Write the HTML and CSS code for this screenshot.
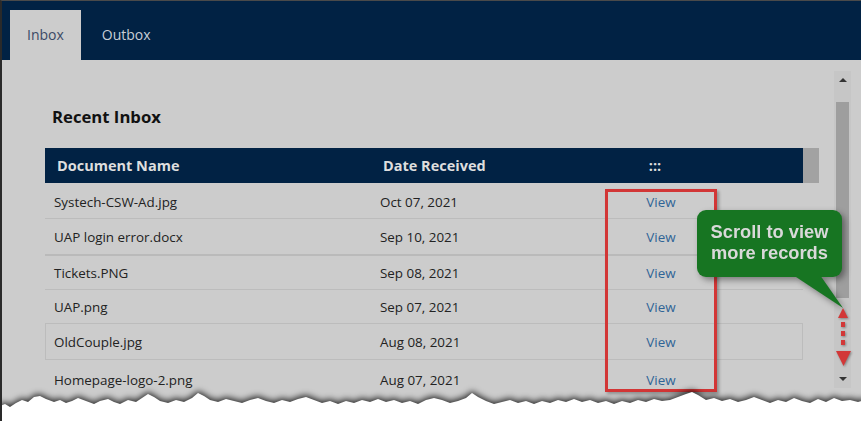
FILE: index.html
```html
<!DOCTYPE html>
<html>
<head>
<meta charset="utf-8">
<link rel="stylesheet" href="styles.css">
</head>
<body>
<div class="window">
  <div class="tabs">
    <div class="tab active">Inbox</div>
    <div class="tab">Outbox</div>
  </div>
  <div class="main">
    <div class="content">
      <h2 class="title">Recent Inbox</h2>
      <div class="table">
        <div class="thead">
          <div class="th c1">Document Name</div>
          <div class="th c2">Date Received</div>
          <div class="th c3">:::</div>
          <div class="th-empty"></div>
          <div class="gutter"></div>
        </div>
        <div class="row r1"><div class="td c1">Systech-CSW-Ad.jpg</div><div class="td c2">Oct 07, 2021</div><div class="td c3"><a class="view">View</a></div></div>
        <div class="row r2"><div class="td c1">UAP login error.docx</div><div class="td c2">Sep 10, 2021</div><div class="td c3"><a class="view">View</a></div></div>
        <div class="row r3"><div class="td c1">Tickets.PNG</div><div class="td c2">Sep 08, 2021</div><div class="td c3"><a class="view">View</a></div></div>
        <div class="row r4"><div class="td c1">UAP.png</div><div class="td c2">Sep 07, 2021</div><div class="td c3"><a class="view">View</a></div></div>
        <div class="row r5"><div class="td c1">OldCouple.jpg</div><div class="td c2">Aug 08, 2021</div><div class="td c3"><a class="view">View</a></div></div>
        <div class="row r6"><div class="td c1">Homepage-logo-2.png</div><div class="td c2">Aug 07, 2021</div><div class="td c3"><a class="view">View</a></div></div>
      </div>
    </div>
    <div class="scrollbar">
      <div class="sb-btn"><span class="tri-up"></span></div>
      <div class="sb-thumb"></div>
      <div class="sb-rest"></div>
      <div class="sb-btn"><span class="tri-down"></span></div>
    </div>
  </div>

  <div class="redbox"></div>

  <div class="callout">Scroll to view<br>more records</div>

  <svg class="arrow" width="20" height="66" viewBox="0 0 20 66">
    <polygon points="9,3 4,13 14,13" fill="#d23838"/>
    <rect x="7" y="17" width="4" height="5" fill="#d23838"/>
    <rect x="7" y="26" width="4" height="5" fill="#d23838"/>
    <rect x="7" y="35" width="4" height="5" fill="#d23838"/>
    <polygon points="2,46 17,46 9.5,61" fill="#d23838"/>
  </svg>

  <svg class="torn" width="865" height="40" viewBox="0 0 865 40" preserveAspectRatio="none">
    <path d="M0,18 L5,16 L10,19 L16,15 L22,12 L28,14 L34,9 L40,8 L46,11 L54,14 L60,12 L66,15 L72,13 L78,10 L86,13 L94,16 L100,13 L108,11 L114,14 L120,16 L128,12 L136,14 L142,10 L148,6 L154,9 L160,13 L168,15 L176,12 L184,14 L192,10 L198,5 L204,8 L210,12 L218,14 L226,11 L234,13 L242,15 L250,12 L258,10 L266,13 L274,15 L282,12 L290,14 L298,11 L306,9 L314,12 L322,15 L330,13 L338,16 L346,13 L354,15 L362,12 L370,14 L378,11 L386,14 L394,12 L402,15 L410,13 L418,16 L426,12 L434,10 L442,12 L450,15 L458,13 L466,10 L472,5 L478,9 L486,13 L494,16 L502,14 L510,12 L518,15 L526,13 L534,16 L542,13 L550,15 L558,12 L566,14 L574,11 L582,14 L590,12 L598,15 L606,13 L614,16 L622,13 L630,15 L638,12 L646,14 L654,11 L662,13 L670,12 L678,9 L686,6 L692,4 L698,7 L706,12 L714,10 L722,13 L730,11 L738,14 L746,12 L754,9 L762,12 L770,15 L778,12 L786,14 L794,10 L802,13 L810,15 L818,11 L826,14 L834,10 L842,13 L850,12 L858,14 L865,12 L865,40 L0,40 Z" fill="#ffffff"/>
  </svg>
</div>
</body>
</html>
```

FILE: styles.css
```css
* { box-sizing: border-box; }
html, body { margin: 0; padding: 0; }
body {
  width: 861px;
  height: 421px;
  overflow: hidden;
  background: #ffffff;
  font-family: "Open Sans", "DejaVu Sans", sans-serif;
}
.window {
  position: relative;
  width: 861px;
  height: 421px;
  overflow: hidden;
  background: #cccccc;
  border-left: 2px solid #2a2a2a;
  border-top: 1px solid #4a4a4a;
}
.tabs {
  height: 59px;
  background: #012244;
  display: flex;
  align-items: flex-end;
  padding-left: 8px;
  gap: 4px;
}
.tab {
  height: 50px;
  line-height: 50px;
  padding: 0 17px;
  font-size: 14px;
  color: #c9ced6;
}
.tab.active {
  background: #cccccc;
  color: #3b4a66;
}
.main {
  display: flex;
  padding-top: 11px;
}
.content {
  width: 832px;
  padding-left: 43px;
}
.title {
  margin: 35px 0 20px 7px;
  font-size: 16.7px;
  line-height: 22px;
  font-weight: 700;
  color: #111111;
}
.table {
  width: 774px;
}
.thead {
  display: grid;
  grid-template-columns: 326px 200px 180px 52px 16px;
  height: 35px;
  background: #012244;
}
.th {
  display: flex;
  align-items: center;
  font-size: 14.5px;
  font-weight: 700;
  color: #dedede;
}
.th.c1, .th.c2 { padding-left: 12px; }
.th.c3 { justify-content: center; padding-right: 12px; }
.gutter { background: #a2a2a2; }
.row {
  display: grid;
  grid-template-columns: 326px 200px 180px 1fr;
  width: 758px;
  font-size: 13.4px;
  color: #222222;
  border-bottom: 1px solid #bcbcbc;
}
.td { display: flex; align-items: center; }
.td.c1, .td.c2 { padding-left: 9px; }
.td.c3 { justify-content: center; }
.view { color: #2f6496; }
.r1 { height: 36px; padding-top: 2px; }
.r2 { height: 37px; border-bottom: 2px solid #bababa; padding-top: 1px; }
.r3 { height: 34px; }
.r4 { height: 33px; border-bottom: none; }
.r5 { height: 37px; border-bottom: none; box-shadow: inset 0 0 0 1px #bcbcbc; }
.r6 { height: 38px; border-bottom: none; padding-top: 1px; }
.scrollbar {
  width: 17px;
  height: 317px;
  background: #c6c6c6;
  display: flex;
  flex-direction: column;
}
.sb-btn {
  height: 18px;
  display: flex;
  align-items: center;
  justify-content: center;
}
.sb-thumb {
  height: 196px;
  margin: 13px 2px 0 2px;
  background: #9e9e9e;
}
.sb-rest { flex: 1; }
.tri-up {
  width: 0; height: 0;
  border-left: 4px solid transparent;
  border-right: 4px solid transparent;
  border-bottom: 4px solid #333333;
}
.tri-down {
  width: 0; height: 0;
  border-left: 4px solid transparent;
  border-right: 4px solid transparent;
  border-top: 4px solid #333333;
}
.redbox {
  position: absolute;
  left: 603px;
  top: 188px;
  width: 112px;
  height: 203px;
  border: 3px solid #d23636;
  box-shadow: 2px 2px 3px rgba(0, 0, 0, 0.3);
}
.callout {
  position: absolute;
  left: 695px;
  top: 209px;
  width: 145px;
  height: 67px;
  padding-top: 11px;
  background: #177522;
  border-radius: 9px;
  color: #d9d9d9;
  font-family: "Liberation Sans", Arial, sans-serif;
  font-weight: 700;
  font-size: 18.3px;
  line-height: 21px;
  text-align: center;
  filter: drop-shadow(3px 3px 3px rgba(0, 0, 0, 0.4));
}
.callout::after {
  content: "";
  position: absolute;
  left: 96px;
  top: 65px;
  width: 52px;
  height: 34px;
  background: #177522;
  clip-path: polygon(0 0, 27px 0, 50px 33px);
}
.arrow {
  position: absolute;
  left: 832px;
  top: 304px;
  filter: drop-shadow(1px 1px 1px rgba(0, 0, 0, 0.35));
}
.torn {
  position: absolute;
  left: -2px;
  top: 387px;
  filter: drop-shadow(0 -2px 3px rgba(0, 0, 0, 0.8));
}
```
